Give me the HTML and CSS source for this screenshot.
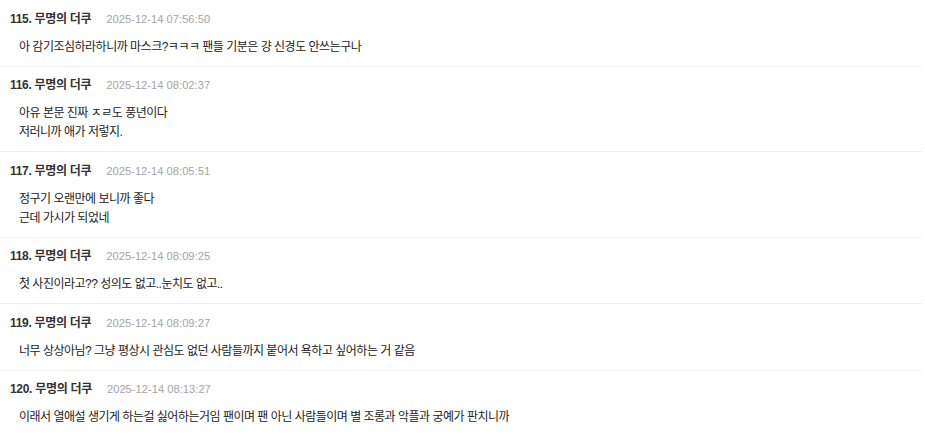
FILE: index.html
```html
<!DOCTYPE html>
<html>
	<head>
		<meta charset="utf-8">
		<title>댓글</title>
		<link rel="stylesheet" href="styles.css">
	</head>
	<body>
		<ul class="cmtList">
			<li class="cmt">
				<div class="cmtHead">
					<span class="cmtName">115. 무명의 더쿠</span>
					<span class="cmtDate">2025-12-14 07:56:50</span>
				</div>
				<div class="cmtBody">아 감기조심하라하니까 마스크?ㅋㅋㅋ 팬들 기분은 걍 신경도 안쓰는구나</div>
			</li>
			<li class="cmt">
				<div class="cmtHead">
					<span class="cmtName">116. 무명의 더쿠</span>
					<span class="cmtDate">2025-12-14 08:02:37</span>
				</div>
				<div class="cmtBody">아유 본문 진짜 ㅈㄹ도 풍년이다<br>저러니까 애가 저렇지.</div>
			</li>
			<li class="cmt">
				<div class="cmtHead">
					<span class="cmtName">117. 무명의 더쿠</span>
					<span class="cmtDate">2025-12-14 08:05:51</span>
				</div>
				<div class="cmtBody">정구기 오랜만에 보니까 좋다<br>근데 가시가 되었네</div>
			</li>
			<li class="cmt">
				<div class="cmtHead">
					<span class="cmtName">118. 무명의 더쿠</span>
					<span class="cmtDate">2025-12-14 08:09:25</span>
				</div>
				<div class="cmtBody">첫 사진이라고?? 성의도 없고..눈치도 없고..</div>
			</li>
			<li class="cmt">
				<div class="cmtHead">
					<span class="cmtName">119. 무명의 더쿠</span>
					<span class="cmtDate">2025-12-14 08:09:27</span>
				</div>
				<div class="cmtBody">너무 상상아님? 그냥 평상시 관심도 없던 사람들까지 붙어서 욕하고 싶어하는 거 같음</div>
			</li>
			<li class="cmt">
				<div class="cmtHead">
					<span class="cmtName">120. 무명의 더쿠</span>
					<span class="cmtDate">2025-12-14 08:13:27</span>
				</div>
				<div class="cmtBody">이래서 열애설 생기게 하는걸 싫어하는거임 팬이며 팬 아닌 사람들이며 별 조롱과 악플과 궁예가 판치니까</div>
			</li>
		</ul>
	</body>
</html>
```

FILE: styles.css
```css
*{
	padding: 0;
	margin: 0;
}
ul,li{
	list-style: none;
}
body{
	background-color: #fff;
	font-family: "Liberation Sans", "Noto Sans CJK KR", sans-serif;
	color: #222;
}
.cmtList{
	width: 922px;
}
.cmtList .cmt{
	padding: 9.5px 10px 9px;
	border-bottom: 1px solid #efefef;
}
/* 마지막 댓글은 구분선 없음 */
.cmtList .cmt:last-child{
	border-bottom: none;
}
.cmt .cmtHead{
	display: flex;
	align-items: center;
	height: 18px;
	line-height: 18px;
}
.cmt .cmtName{
	font-size: 12px;
	font-weight: bold;
	letter-spacing: -0.3px;
	color: #333;
}
.cmt .cmtDate{
	margin-left: 15px;
	font-size: 11.2px;
	color: #a5a5a5;
}
.cmt .cmtBody{
	margin-top: 10px;
	padding-left: 9px;
	font-size: 12px;
	line-height: 19px;
	letter-spacing: -0.5px;
	color: #222;
}
```
